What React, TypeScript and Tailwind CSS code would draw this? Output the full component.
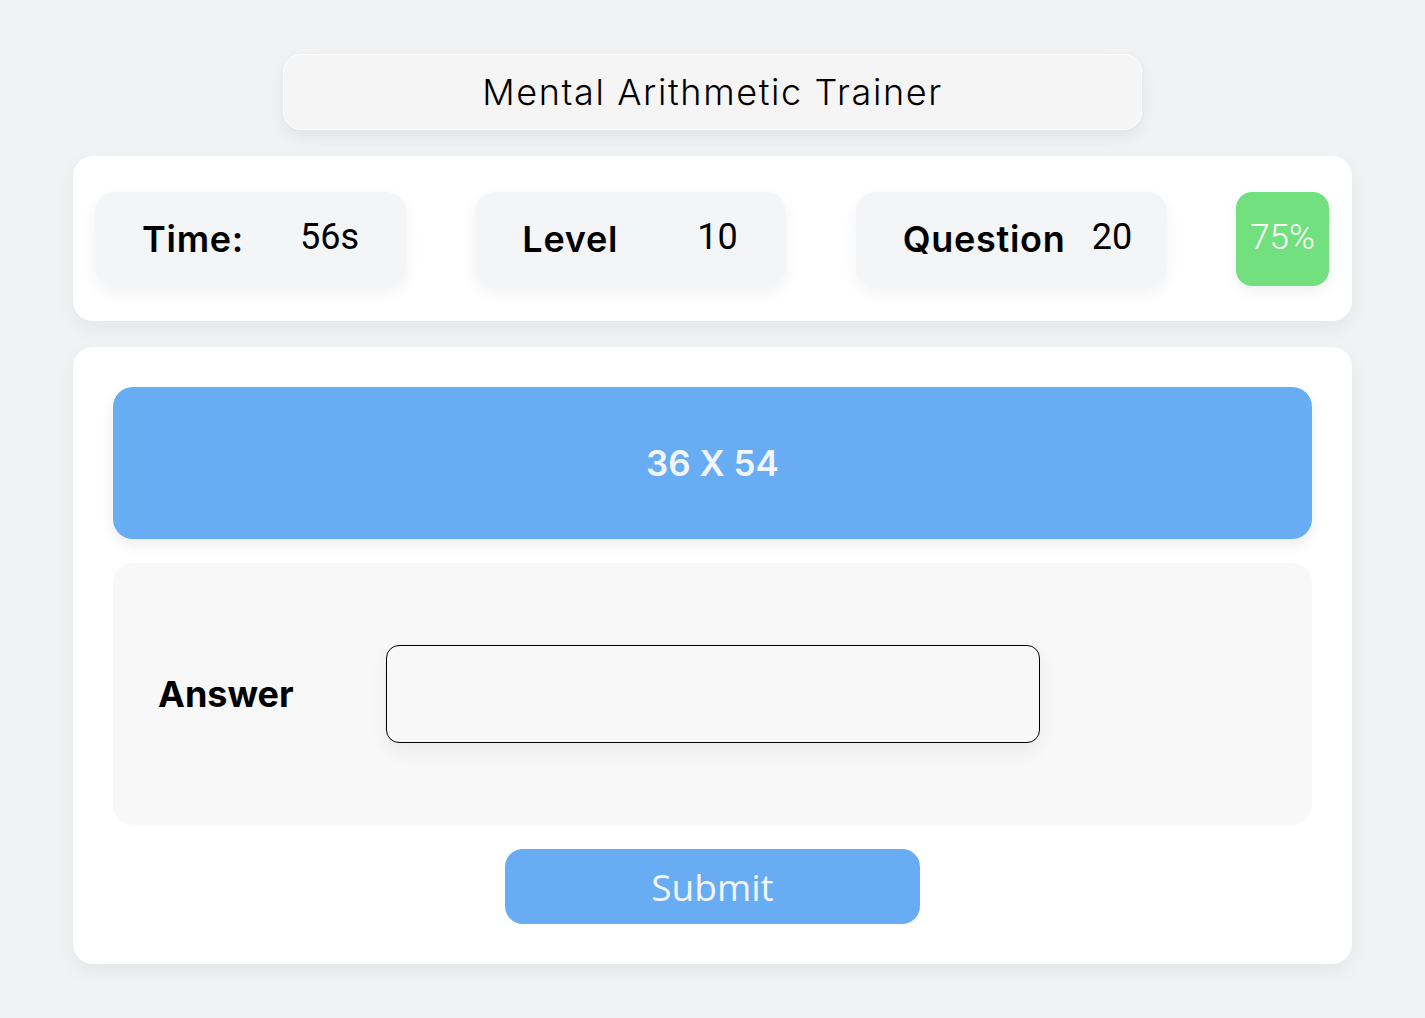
const heading = { fontFamily: 'Inter, "Noto Sans", sans-serif' };
const numeric = { fontFamily: 'Roboto, "Liberation Sans", sans-serif' };

function Stat({ label, value, labelWidth }: { label: string; value: string; labelWidth: string }) {
  return (
    <div className="w-[311px] h-[94px] rounded-[20px] bg-[#f4f5f7] shadow-[0_6px_16px_rgba(0,0,0,0.06)] flex items-center pl-[47px]">
      <span className={`${labelWidth} text-[36px] font-semibold text-black leading-none tracking-[0.02em]`} style={heading}>
        {label}
      </span>
      <span className="text-[36px] text-black leading-none -mt-[4px]" style={numeric}>
        {value}
      </span>
    </div>
  );
}

export default function App() {
  return (
    <div className="min-h-screen w-full bg-[#f1f2f4] flex flex-col items-center pt-[54px] pb-[54px]">
      {/* title */}
      <div className="w-[859px] h-[76px] rounded-[18px] bg-[#f5f5f5] border border-white shadow-[0_6px_16px_rgba(0,0,0,0.07)] flex items-center justify-center">
        <h1 className="text-[36px] font-light text-black tracking-[0.045em]" style={heading}>
          Mental Arithmetic Trainer
        </h1>
      </div>

      {/* stats */}
      <div className="mt-[26px] w-[1279px] h-[165px] rounded-[20px] bg-white shadow-[0_8px_20px_rgba(0,0,0,0.05)] flex items-center justify-between pl-[22px] pr-[23px]">
        <Stat label="Time:" value="56s" labelWidth="w-[158px]" />
        <Stat label="Level" value="10" labelWidth="w-[175px]" />
        <Stat label="Question" value="20" labelWidth="w-[189px]" />
        <div
          className="w-[93px] h-[94px] rounded-[16px] bg-[#73e07f] shadow-[0_6px_14px_rgba(0,0,0,0.06)] flex items-center justify-center text-[35px] text-white font-light"
          style={numeric}
        >
          75%
        </div>
      </div>

      {/* main card */}
      <div className="mt-[26px] w-[1279px] rounded-[20px] bg-white shadow-[0_8px_20px_rgba(0,0,0,0.05)] p-[40px] flex flex-col items-center gap-[24px]">
        <div className="w-full h-[152px] rounded-[20px] bg-[#68adf3] shadow-[0_6px_14px_rgba(0,0,0,0.08)] flex items-center justify-center">
          <span className="text-[35px] font-semibold text-[#f2f6fa]" style={heading}>
            36 X 54
          </span>
        </div>

        <div className="w-full h-[262px] rounded-[20px] bg-[#f8f8f8] flex items-center pl-[45px]">
          <label className="w-[228px] text-[36px] font-bold text-black" style={heading}>
            Answer
          </label>
          <input
            type="text"
            className="w-[654px] h-[98px] rounded-[13px] border border-black bg-[#f8f8f8] shadow-[0_8px_18px_rgba(0,0,0,0.06)] px-4 text-[32px] outline-none"
          />
        </div>

        <button
          className="w-[415px] h-[75px] rounded-[18px] bg-[#68adf3] text-[#f2f4f6] text-[37px] font-medium"
          style={{ fontFamily: '"Open Sans", "Noto Sans", sans-serif' }}
        >
          Submit
        </button>
      </div>
    </div>
  );
}
